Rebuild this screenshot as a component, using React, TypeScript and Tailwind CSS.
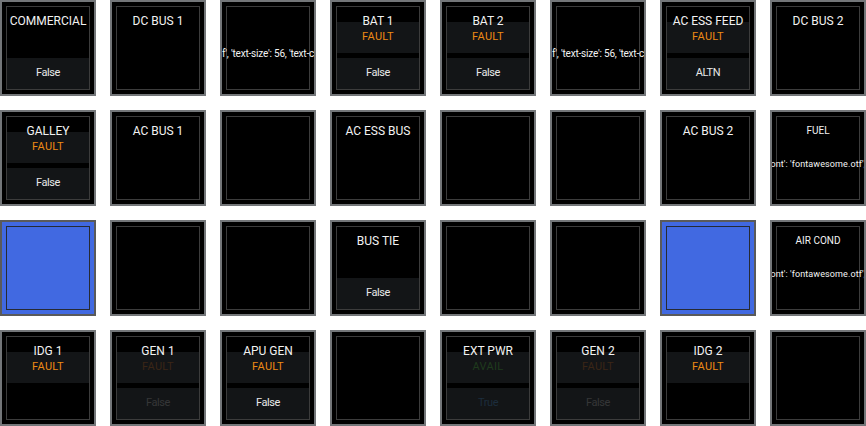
import React from "react";

type Slot = { text: string; color: string };
type Overflow = { left: string; mid: string; right: string; size: string };
type Cell =
  | { kind: "blank" }
  | { kind: "blue" }
  | {
      kind: "std";
      title?: string;
      small?: boolean;
      fault?: Slot;
      status?: Slot;
      overflow?: Overflow;
    };

const ORANGE = "text-[#ec8a14]";
const WHITE = "text-[#e8e8e8]";
const DIM_FAULT = "text-[#3b2616]";
const DIM_FALSE = "text-[#363738]";
const DIM_AVAIL = "text-[#1f3b1d]";
const DIM_TRUE = "text-[#1c2d3d]";

const ovTop: Overflow = {
  left: "{'text': '\\uf0e7', 'font': 'fontawesome.ot",
  mid: "f', 'text-size': 56, 'text-c",
  right: "olor': 'white', 'x': 0}",
  size: "text-[10px] tracking-[-0.2px]",
};
const ovFa: Overflow = {
  left: "{'text': '\\uf0e7', 'f",
  mid: "ont': 'fontawesome.otf',",
  right: " 'text-size': 56}",
  size: "text-[9px] tracking-[0.1px]",
};

const cells: Cell[] = [
  { kind: "std", title: "COMMERCIAL", status: { text: "False", color: WHITE } },
  { kind: "std", title: "DC BUS 1" },
  { kind: "std", overflow: ovTop },
  { kind: "std", title: "BAT 1", fault: { text: "FAULT", color: ORANGE }, status: { text: "False", color: WHITE } },
  { kind: "std", title: "BAT 2", fault: { text: "FAULT", color: ORANGE }, status: { text: "False", color: WHITE } },
  { kind: "std", overflow: ovTop },
  { kind: "std", title: "AC ESS FEED", fault: { text: "FAULT", color: ORANGE }, status: { text: "ALTN", color: WHITE } },
  { kind: "std", title: "DC BUS 2" },

  { kind: "std", title: "GALLEY", fault: { text: "FAULT", color: ORANGE }, status: { text: "False", color: WHITE } },
  { kind: "std", title: "AC BUS 1" },
  { kind: "blank" },
  { kind: "std", title: "AC ESS BUS" },
  { kind: "blank" },
  { kind: "blank" },
  { kind: "std", title: "AC BUS 2" },
  { kind: "std", title: "FUEL", small: true, overflow: ovFa },

  { kind: "blue" },
  { kind: "blank" },
  { kind: "blank" },
  { kind: "std", title: "BUS TIE", status: { text: "False", color: WHITE } },
  { kind: "blank" },
  { kind: "blank" },
  { kind: "blue" },
  { kind: "std", title: "AIR COND", small: true, overflow: ovFa },

  { kind: "std", title: "IDG 1", fault: { text: "FAULT", color: ORANGE } },
  { kind: "std", title: "GEN 1", fault: { text: "FAULT", color: DIM_FAULT }, status: { text: "False", color: DIM_FALSE } },
  { kind: "std", title: "APU GEN", fault: { text: "FAULT", color: ORANGE }, status: { text: "False", color: WHITE } },
  { kind: "blank" },
  { kind: "std", title: "EXT PWR", fault: { text: "AVAIL", color: DIM_AVAIL }, status: { text: "True", color: DIM_TRUE } },
  { kind: "std", title: "GEN 2", fault: { text: "FAULT", color: DIM_FAULT }, status: { text: "False", color: DIM_FALSE } },
  { kind: "std", title: "IDG 2", fault: { text: "FAULT", color: ORANGE } },
  { kind: "blank" },
];

function CellView({ cell }: { cell: Cell }) {
  if (cell.kind === "blue") {
    return (
      <div className="w-[96px] h-[96px] border-2 border-[#5a5a5a] bg-[#4169e1] p-[4px]">
        <div className="h-full w-full border border-[#262a33]" />
      </div>
    );
  }
  if (cell.kind === "blank") {
    return (
      <div className="w-[96px] h-[96px] border-2 border-[#737679] bg-black p-[4px]">
        <div className="h-full w-full border border-[#3c3c3c]" />
      </div>
    );
  }
  return (
    <div className="w-[96px] h-[96px] border-2 border-[#737679] bg-black p-[4px] overflow-hidden">
      <div className="h-full w-full border border-[#3c3c3c] flex flex-col">
        <div
          className={
            "relative z-10 h-[21px] pt-[7px] mb-[-6px] leading-[14px] text-center whitespace-nowrap text-[#f2f2f2] " +
            (cell.small ? "text-[10px]" : "text-[12px]")
          }
        >
          {cell.title ?? ""}
        </div>
        {cell.overflow ? (
          <div
            className={
              "-mx-[7px] mt-[25px] h-[14px] leading-[14px] w-[96px] overflow-hidden flex justify-center text-[#f4f4f4] whitespace-nowrap " +
              cell.overflow.size
            }
          >
            <span className="shrink-0 w-[60px] overflow-hidden flex justify-end">
              <span className="shrink-0">{cell.overflow.left}</span>
            </span>
            <span className="shrink-0">{cell.overflow.mid}</span>
            <span className="shrink-0 w-[60px] overflow-hidden">{cell.overflow.right}</span>
          </div>
        ) : (
          <>
            <div
              className={
                "h-[31px] flex items-center justify-center text-[11px] tracking-[0.3px] " +
                (cell.fault ? "bg-[#131517] " + cell.fault.color : "")
              }
            >
              {cell.fault?.text ?? ""}
            </div>
            <div
              className={
                "mt-[5px] h-[31px] flex items-center justify-center text-[11px] tracking-[-0.4px] " +
                (cell.status ? "bg-[#131517] " + cell.status.color : "")
              }
            >
              {cell.status?.text ?? ""}
            </div>
          </>
        )}
      </div>
    </div>
  );
}

export default function App() {
  return (
    <div
      className="w-[866px] h-[426px] bg-white grid grid-cols-[repeat(8,96px)] grid-rows-[repeat(4,96px)] gap-[14px]"
      style={{ fontFamily: "Roboto, 'Liberation Sans', sans-serif" }}
    >
      {cells.map((c, i) => (
        <CellView key={i} cell={c} />
      ))}
    </div>
  );
}
